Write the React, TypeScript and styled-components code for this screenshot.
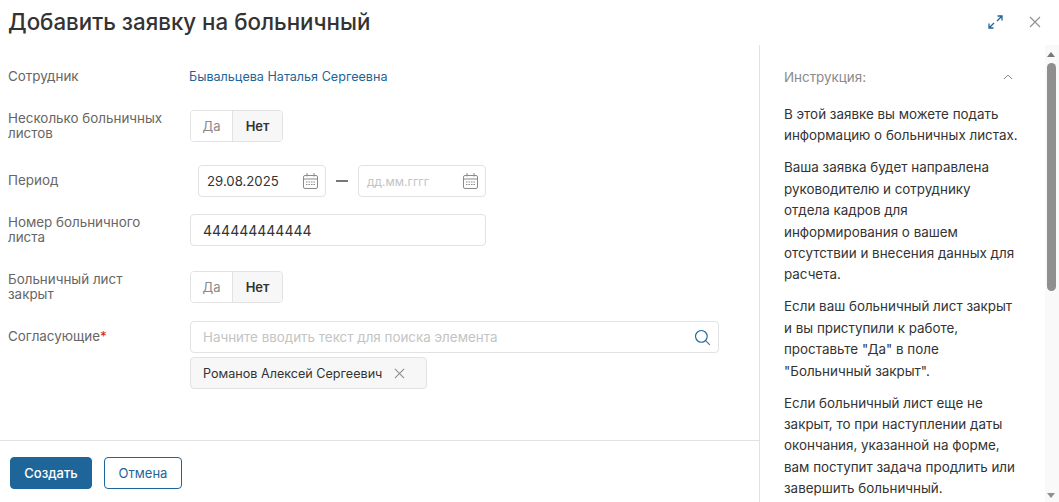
import React from "react";
import styled, { createGlobalStyle } from "styled-components";

const Global = createGlobalStyle`
  html, body { margin: 0; padding: 0; background: #fff; overflow: hidden; }
  body { font-family: Inter, "Noto Sans", sans-serif; color: #333; }
  * { box-sizing: border-box; }
`;

const Modal = styled.div`
  width: 1059px;
  height: 502px;
  display: flex;
  flex-direction: column;
  overflow: hidden;
`;

const Header = styled.header`
  height: 45px;
  flex: none;
  display: flex;
  align-items: center;
  padding: 0 18px 2px 8px;
`;

const Title = styled.h1`
  margin: 0;
  flex: 1;
  font-size: 22.3px;
  line-height: 28px;
  font-weight: 500;
  color: #333;
`;

const HeaderActions = styled.div`
  display: flex;
  align-items: center;
  gap: 26px;
`;

const IconButton = styled.span<{ $color: string }>`
  display: flex;
  color: ${(p) => p.$color};
`;

const Body = styled.div`
  flex: 1;
  min-height: 0;
  display: flex;
`;

const Main = styled.main`
  width: 759px;
  flex: none;
  display: flex;
  flex-direction: column;
`;

const Form = styled.div`
  flex: 1;
  padding: 0 40px 0 8px;
`;

const Row = styled.div<{ $top: number }>`
  display: grid;
  grid-template-columns: 182px 1fr;
  align-items: start;
  margin-top: ${(p) => p.$top}px;
`;

const Label = styled.div<{ $pad?: number }>`
  font-size: 13.4px;
  line-height: 15px;
  color: #666;
  padding-top: ${(p) => p.$pad ?? 1}px;
  padding-right: 20px;
`;

const Required = styled.span`
  color: #e02020;
`;

const UserLink = styled.a`
  font-size: 12.6px;
  line-height: 15px;
  color: #1e6599;
  margin-left: -1px;
`;

const Toggle = styled.div`
  display: flex;
  width: 93px;
  height: 32px;
  border: 1px solid #e2e2e2;
  border-radius: 4px;
  overflow: hidden;
`;

const ToggleOption = styled.div<{ $active?: boolean; $w: number }>`
  width: ${(p) => p.$w}px;
  display: flex;
  align-items: center;
  justify-content: center;
  font-size: 13px;
  font-weight: ${(p) => (p.$active ? 600 : 400)};
  color: ${(p) => (p.$active ? "#333" : "#8a8a8a")};
  background: ${(p) => (p.$active ? "#f7f7f7" : "#fff")};
  border-left: ${(p) => (p.$active ? "1px solid #e2e2e2" : "none")};
`;

const DateRange = styled.div`
  display: flex;
  align-items: center;
  padding-left: 8px;
`;

const DateBox = styled.div`
  width: 128px;
  height: 32px;
  border: 1px solid #e2e2e2;
  border-radius: 4px;
  display: flex;
  align-items: center;
  justify-content: space-between;
  padding: 0 7px 0 8px;
  color: #8a8a8a;
`;

const DateValue = styled.span<{ $placeholder?: boolean }>`
  font-size: ${(p) => (p.$placeholder ? 12 : 13.2)}px;
  color: ${(p) => (p.$placeholder ? "#c4c4c4" : "#333")};
`;

const Dash = styled.span`
  width: 32px;
  display: flex;
  justify-content: center;
  &::before {
    content: "";
    width: 12px;
    height: 2px;
    background: #777;
  }
`;

const TextBox = styled.div`
  width: 296px;
  height: 32px;
  border: 1px solid #e2e2e2;
  border-radius: 4px;
  display: flex;
  align-items: center;
  padding: 0 12px;
  font-size: 14px;
  color: #333;
`;

const SearchBox = styled.div`
  width: 529px;
  height: 32px;
  border: 1px solid #e2e2e2;
  border-radius: 4px;
  display: flex;
  align-items: center;
  justify-content: space-between;
  padding: 0 7px 0 12px;
  font-size: 13.4px;
  color: #c4c4c4;
`;

const Chip = styled.div`
  width: 237px;
  height: 32px;
  margin-top: 4px;
  border: 1px solid #e2e2e2;
  border-radius: 4px;
  background: #f7f7f7;
  display: flex;
  align-items: center;
  gap: 12px;
  padding-left: 12px;
  font-size: 12.6px;
  color: #333;
`;

const ChipIcon = styled.span`
  display: flex;
  color: #8a8a8a;
`;

const Footer = styled.footer`
  height: 62px;
  flex: none;
  border-top: 1px solid #e2e2e2;
  padding: 16px 10px 0;
  display: flex;
  align-items: flex-start;
  gap: 12px;
`;

const Button = styled.button<{ $primary?: boolean; $w: number }>`
  width: ${(p) => p.$w}px;
  height: 32px;
  border-radius: 4px;
  border: 1px solid #1e6599;
  background: ${(p) => (p.$primary ? "#1e6599" : "#fff")};
  color: ${(p) => (p.$primary ? "#fff" : "#1e6599")};
  font-family: inherit;
  font-size: 13px;
  font-weight: ${(p) => (p.$primary ? 500 : 400)};
  padding: 0;
`;

const Aside = styled.aside`
  flex: 1;
  min-width: 0;
  display: flex;
  border-left: 1px solid #e2e2e2;
`;

const AsideContent = styled.div`
  flex: 1;
  min-width: 0;
  padding: 22px 25px 0 24px;
  overflow: hidden;
`;

const AsideHead = styled.div`
  display: flex;
  align-items: center;
  justify-content: space-between;
  padding-right: 7px;
  font-size: 13.4px;
  line-height: 20px;
  color: #8a8a8a;
  margin-bottom: 17px;
`;

const Para = styled.p`
  margin: 0 0 10.6px;
  font-size: 13.4px;
  line-height: 21.4px;
  color: #333;
`;

const Scrollbar = styled.div`
  width: 14px;
  flex: none;
  background: #f9f9f9;
  position: relative;
`;

const ScrollThumb = styled.div`
  position: absolute;
  top: 18px;
  left: 2px;
  width: 9px;
  height: 228px;
  background: #8f8f8f;
  border-radius: 5px;
`;

const ArrowUp = styled.span`
  position: absolute;
  top: 7px;
  left: 2px;
  border-left: 4.5px solid transparent;
  border-right: 4.5px solid transparent;
  border-bottom: 5px solid #777;
`;

const ArrowDown = styled.span`
  position: absolute;
  bottom: 4px;
  left: 2px;
  border-left: 4.5px solid transparent;
  border-right: 4.5px solid transparent;
  border-top: 5px solid #8f8f8f;
`;

const CalendarIcon = () => (
  <svg width="15" height="16" viewBox="0 0 15 16" fill="none" stroke="currentColor" strokeWidth="1">
    <rect x="0.5" y="2.5" width="14" height="13" rx="1.5" />
    <path d="M0.5 6h14M4 0v3.5M11 0v3.5" />
    <path d="M3 9h1.5M5.5 9H7M8 9h1.5M10.5 9H12M3 11.5h1.5M5.5 11.5H7M8 11.5h1.5M10.5 11.5H12" />
  </svg>
);

const CrossIcon = ({ size }: { size: number }) => (
  <svg width={size} height={size} viewBox="0 0 12 12" fill="none" stroke="currentColor" strokeWidth="1.1">
    <path d="M1 1l10 10M11 1L1 11" />
  </svg>
);

const ExpandIcon = () => (
  <svg width="15" height="14" viewBox="0 0 15 14" fill="none" stroke="currentColor" strokeWidth="1.3">
    <path d="M9.5 1h4.5v4.5M14 1L9 6M5.5 13H1V8.5M1 13l5-5" />
  </svg>
);

const SearchIcon = () => (
  <svg width="17" height="17" viewBox="0 0 18 18" fill="none" stroke="#1e6599" strokeWidth="1.2">
    <circle cx="7.8" cy="7.8" r="6.2" />
    <path d="M12.3 12.3l4.5 4.5" stroke="#666" />
  </svg>
);

const ChevronIcon = () => (
  <svg width="10" height="6" viewBox="0 0 10 6" fill="none" stroke="#8a8a8a" strokeWidth="1">
    <path d="M1 5l4-4 4 4" />
  </svg>
);

const YesNo = () => (
  <Toggle>
    <ToggleOption $w={42}>Да</ToggleOption>
    <ToggleOption $w={51} $active>Нет</ToggleOption>
  </Toggle>
);

export default function App() {
  return (
    <Modal>
      <Global />
      <Header>
        <Title>Добавить заявку на больничный</Title>
        <HeaderActions>
          <IconButton $color="#1e6599"><ExpandIcon /></IconButton>
          <IconButton $color="#8f8f8f"><CrossIcon size={12} /></IconButton>
        </HeaderActions>
      </Header>
      <Body>
        <Main>
          <Form>
            <Row $top={24}>
              <Label $pad={0}>Сотрудник</Label>
              <UserLink>Бывальцева Наталья Сергеевна</UserLink>
            </Row>
            <Row $top={26}>
              <Label>Несколько больничных листов</Label>
              <YesNo />
            </Row>
            <Row $top={23}>
              <Label $pad={8}>Период</Label>
              <DateRange>
                <DateBox>
                  <DateValue>29.08.2025</DateValue>
                  <CalendarIcon />
                </DateBox>
                <Dash />
                <DateBox>
                  <DateValue $placeholder>дд.мм.гггг</DateValue>
                  <CalendarIcon />
                </DateBox>
              </DateRange>
            </Row>
            <Row $top={17}>
              <Label>Номер больничного листа</Label>
              <TextBox>444444444444</TextBox>
            </Row>
            <Row $top={25}>
              <Label>Больничный лист закрыт</Label>
              <YesNo />
            </Row>
            <Row $top={18}>
              <Label $pad={8}>Согласующие<Required>*</Required></Label>
              <div>
                <SearchBox>
                  Начните вводить текст для поиска элемента
                  <SearchIcon />
                </SearchBox>
                <Chip>
                  Романов Алексей Сергеевич
                  <ChipIcon><CrossIcon size={11} /></ChipIcon>
                </Chip>
              </div>
            </Row>
          </Form>
          <Footer>
            <Button $primary $w={82}>Создать</Button>
            <Button $w={78}>Отмена</Button>
          </Footer>
        </Main>
        <Aside>
          <AsideContent>
            <AsideHead>Инструкция:<ChevronIcon /></AsideHead>
            <Para>В этой заявке вы можете подать информацию о больничных листах.</Para>
            <Para>Ваша заявка будет направлена руководителю и сотруднику отдела кадров для информирования о вашем отсутствии и внесения данных для расчета.</Para>
            <Para>Если ваш больничный лист закрыт и вы приступили к работе, проставьте "Да" в поле "Больничный закрыт".</Para>
            <Para>Если больничный лист еще не закрыт, то при наступлении даты окончания, указанной на форме, вам поступит задача продлить или завершить больничный.</Para>
          </AsideContent>
          <Scrollbar>
            <ArrowUp />
            <ScrollThumb />
            <ArrowDown />
          </Scrollbar>
        </Aside>
      </Body>
    </Modal>
  );
}
